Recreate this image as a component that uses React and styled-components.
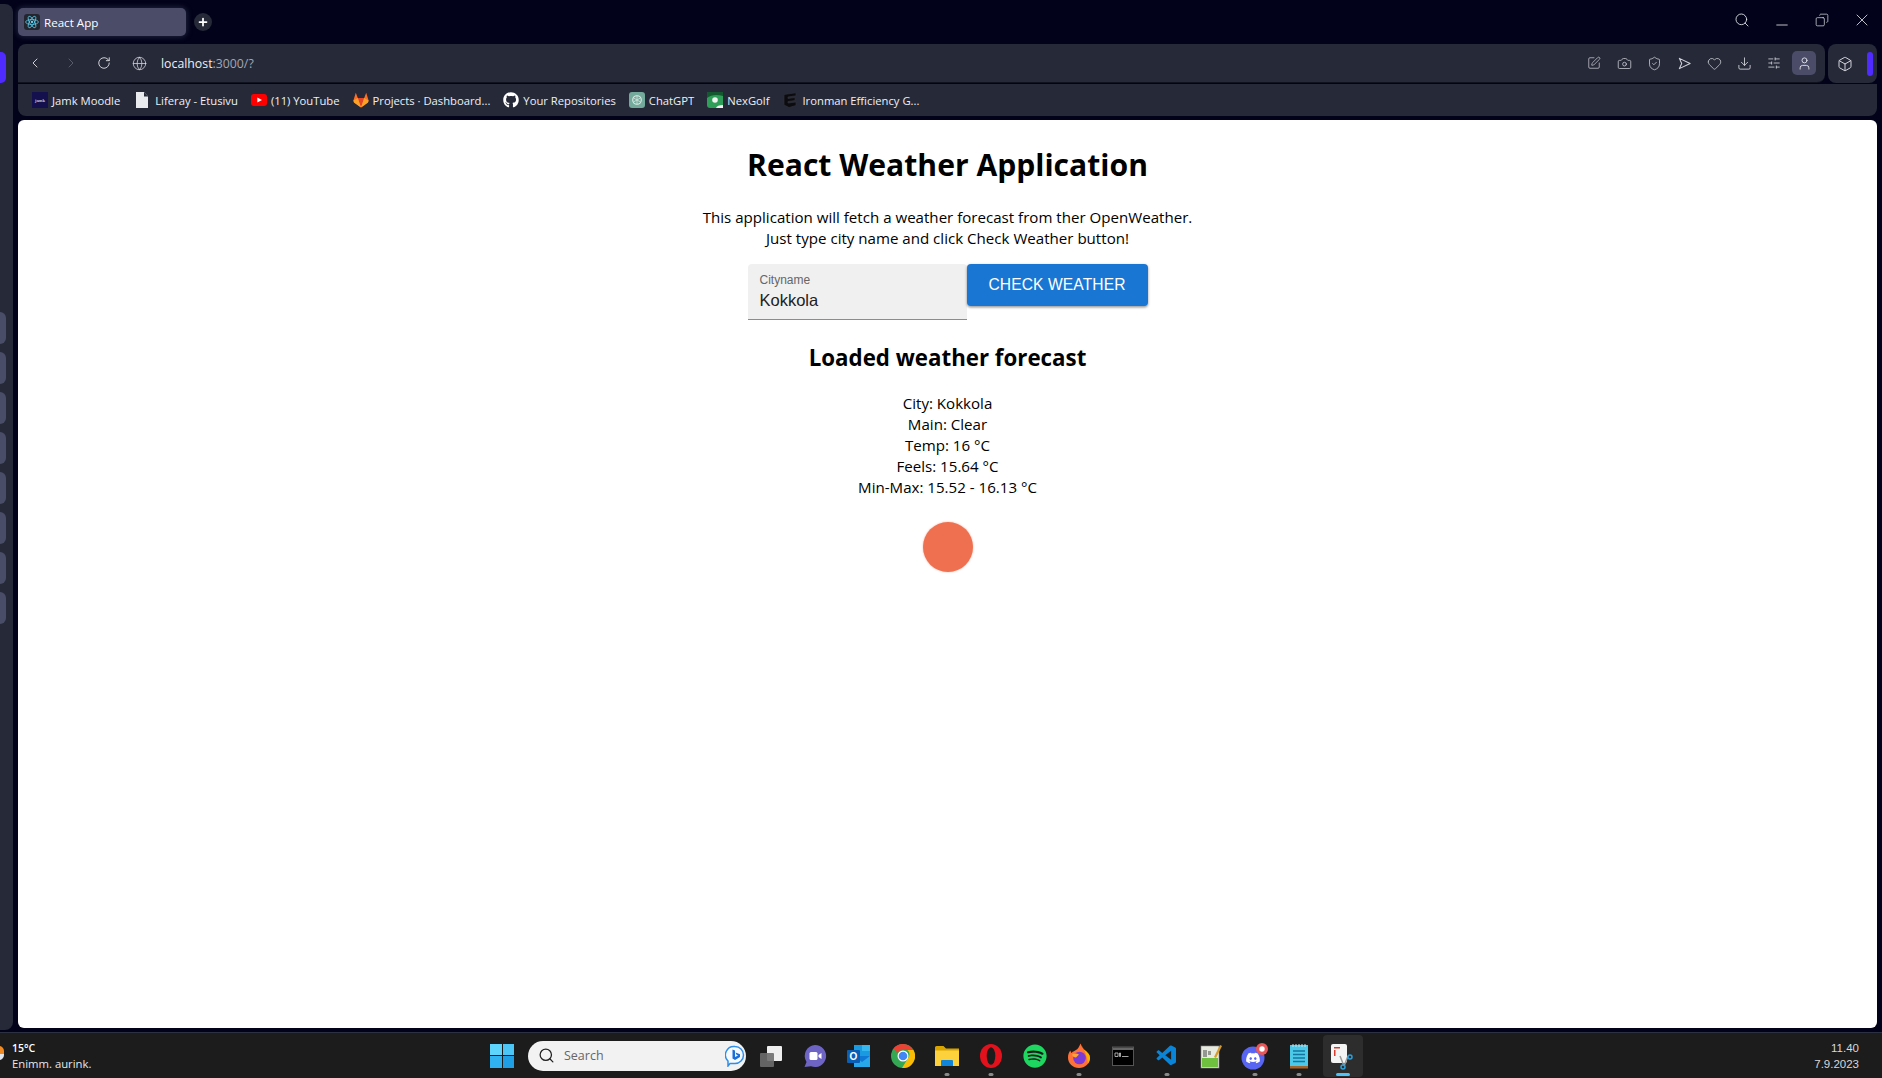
import React from 'react'
import styled, { createGlobalStyle } from 'styled-components'
import {
  ChevronLeft, ChevronRight, RotateCw, Globe, Search, Minus, Copy, X, SquarePen,
  Camera, ShieldCheck, Heart, Download, SlidersHorizontal, User, Box, Plus,
} from 'lucide-react'
import { FaGithub, FaSpotify, FaDiscord } from 'react-icons/fa'
import { VscVscode } from 'react-icons/vsc'

const GlobalStyle = createGlobalStyle`
  html, body { margin: 0; padding: 0; background: #02031a; overflow: hidden; }
  * { box-sizing: border-box; }
`

const Desktop = styled.div`
  width: 1882px;
  height: 1078px;
  display: flex;
  flex-direction: column;
  background: #02031a;
  font-family: 'Open Sans', 'Noto Sans', sans-serif;
`

const Browser = styled.div`
  flex: 1;
  min-height: 0;
  display: flex;
`

const Sidebar = styled.div`
  width: 13px;
  margin: 4px 5px 2px 0;
  background: #262938;
  border-radius: 0 8px 8px 0;
  display: flex;
  flex-direction: column;
`

const SideActive = styled.div`
  width: 6px;
  height: 31px;
  margin-top: 48px;
  background: #4f2bff;
  border-radius: 0 5px 5px 0;
`

const SideList = styled.div`
  display: flex;
  flex-direction: column;
  gap: 8px;
  margin-top: 229px;
`

const SideSlot = styled.div`
  width: 6px;
  height: 32px;
  background: #4a4d68;
  border-radius: 0 6px 6px 0;
`

const Main = styled.div`
  flex: 1;
  min-width: 0;
  display: flex;
  flex-direction: column;
  padding-right: 5px;
`

const TitleBar = styled.div`
  height: 44px;
  padding-top: 8px;
  display: flex;
  align-items: flex-start;
`

const Tab = styled.div`
  width: 168px;
  height: 28px;
  padding: 0 6px;
  display: flex;
  align-items: center;
  gap: 4px;
  background: #4a4c68;
  border-radius: 5px;
  box-shadow: 0 0 6px rgba(120, 125, 165, 0.35);
  color: #fff;
  font-size: 11.6px;
`

const Favicon = styled.div`
  width: 16px;
  height: 16px;
  display: flex;
  align-items: center;
  justify-content: center;
  background: #23262f;
  border-radius: 3px;
`

const NewTab = styled.div`
  width: 18px;
  height: 18px;
  margin: 5px 0 0 8px;
  display: flex;
  align-items: center;
  justify-content: center;
  background: #262938;
  border-radius: 50%;
  color: #fff;
`

const WindowControls = styled.div`
  margin-left: auto;
  display: flex;
  align-items: center;
  gap: 10px;
  height: 24px;
  color: #e4e5ea;
`

const WindowControl = styled.div`
  width: 30px;
  display: flex;
  align-items: center;
  justify-content: center;
`

const ToolRow = styled.div`
  height: 39px;
  display: flex;
  gap: 3px;
`

const AddressBar = styled.div`
  flex: 1;
  display: flex;
  align-items: center;
  padding: 0 9px 0 0;
  background: #262938;
  border-radius: 8px 8px 8px 0;
  border-bottom: 1px solid #11121f;
  color: #e8e9ef;
`

const NavIcon = styled.div`
  width: ${({ $w }) => $w}px;
  display: flex;
  justify-content: center;
  color: ${({ $dim }) => ($dim ? '#5d6070' : '#d9dae0')};
`

const Url = styled.div`
  font-size: 12.3px;
  color: #f0f1f5;
  span { color: #a4a6b2; }
`

const Actions = styled.div`
  margin-left: auto;
  display: flex;
  align-items: center;
  color: #d4d5dc;
`

const Action = styled.div`
  width: 30px;
  height: 24px;
  display: flex;
  align-items: center;
  justify-content: center;
`

const Profile = styled.div`
  width: 24px;
  height: 24px;
  margin-left: 3px;
  display: flex;
  align-items: center;
  justify-content: center;
  background: #4a4c68;
  border-radius: 5px;
  color: #e8e9ef;
`

const ExtensionBox = styled.div`
  width: 49px;
  display: flex;
  align-items: center;
  padding-left: 9px;
  gap: 14px;
  background: #262938;
  border-radius: 8px;
  color: #e0e1e7;
`

const ExtensionBar = styled.div`
  width: 6px;
  height: 24px;
  background: #4f2bff;
  border-radius: 3px;
`

const Bookmarks = styled.div`
  height: 32px;
  margin-top: 1px;
  padding-left: 14px;
  display: flex;
  align-items: center;
  gap: 13px;
  background: #262938;
  border-radius: 0 0 8px 8px;
`

const Bookmark = styled.div`
  display: flex;
  align-items: center;
  gap: 4px;
  color: #eef0f5;
  font-size: 11.25px;
  white-space: nowrap;
`

const Page = styled.div`
  flex: 1;
  min-height: 0;
  margin-top: 4px;
  margin-bottom: 4px;
  padding-top: 27px;
  background: #fff;
  border-radius: 6px;
  display: flex;
  flex-direction: column;
  align-items: center;
  color: #000;
  font-family: 'Open Sans', sans-serif;
  text-align: center;
`

const Title = styled.h1`
  margin: 0;
  font-size: 30.1px;
  line-height: 36px;
  font-weight: 700;
`

const Intro = styled.p`
  margin: 24px 0 0;
  font-size: 15.1px;
  line-height: 21px;
`

const SearchForm = styled.div`
  margin-top: 15px;
  display: flex;
  align-items: flex-start;
`

const Field = styled.div`
  width: 219px;
  height: 56px;
  padding: 8px 12px 0;
  background: #f0f0f0;
  border-bottom: 1px solid #8c8c8c;
  border-radius: 4px 4px 0 0;
  text-align: left;
  font-family: 'Liberation Sans', Arial, sans-serif;
`

const FieldLabel = styled.div`
  font-size: 12px;
  line-height: 16px;
  color: #666;
`

const FieldValue = styled.div`
  margin-top: 1px;
  font-size: 16.5px;
  line-height: 23px;
  color: #212121;
`

const CheckButton = styled.button`
  width: 181px;
  height: 42px;
  padding: 0;
  border: 0;
  background: #1976d2;
  border-radius: 4px;
  box-shadow: 0 1px 3px rgba(0, 0, 0, 0.35), 0 2px 2px rgba(0, 0, 0, 0.12);
  color: #fff;
  font-family: 'Liberation Sans', Arial, sans-serif;
  font-size: 15.6px;
  letter-spacing: 0.1px;
`

const Subtitle = styled.h2`
  margin: 22px 0 0;
  font-size: 22.3px;
  line-height: 31px;
  font-weight: 700;
`

const Forecast = styled.div`
  margin-top: 20px;
  font-size: 15.1px;
  line-height: 21px;
`

const SunDot = styled.div`
  width: 50px;
  height: 50px;
  margin-top: 24px;
  background: #ee7050;
  border-radius: 50%;
  box-shadow: 0 0 2px rgba(238, 112, 80, 0.6);
`

const Taskbar = styled.div`
  height: 46px;
  flex: none;
  position: relative;
  display: flex;
  align-items: center;
  background: #1c1c1c;
  border-top: 1px solid #2b3140;
`

const WeatherGlyph = styled.div`
  position: absolute;
  left: -6px;
  top: 13px;
  width: 10px;
  height: 14px;
  background: linear-gradient(#f08a24 60%, #dfe6ee 60%);
  border-radius: 5px;
`

const Weather = styled.div`
  width: 490px;
  padding-left: 12px;
  color: #e8e8e8;
  font-size: 11.3px;
  line-height: 16px;
  font-family: 'Open Sans', sans-serif;
`

const WeatherTemp = styled.div`
  font-size: 10.5px;
  font-weight: 600;
  color: #fff;
`

const StartButton = styled.div`
  width: 24px;
  height: 24px;
  display: grid;
  grid-template-columns: 1fr 1fr;
  gap: 1px;
`

const StartPane = styled.div`
  background: ${({ $c }) => $c};
`

const SearchBox = styled.div`
  width: 218px;
  height: 30px;
  margin-left: 14px;
  padding: 0 1px 0 10px;
  display: flex;
  align-items: center;
  gap: 9px;
  background: #f2f2f2;
  border-radius: 15px;
  color: #666;
  font-size: 12.5px;
`

const BingMark = styled.div`
  margin-left: auto;
  display: flex;
`

const Apps = styled.div`
  margin-left: 5px;
  display: flex;
  align-items: center;
  gap: 4px;
`

const AppSlot = styled.div`
  position: relative;
  width: 40px;
  height: 42px;
  flex: none;
  display: flex;
  align-items: center;
  justify-content: center;
  background: ${({ $active }) => ($active ? '#2d2d2d' : 'transparent')};
  border-radius: 4px;
`

const RunDot = styled.div`
  position: absolute;
  bottom: 1px;
  left: 50%;
  width: ${({ $active }) => ($active ? 14 : 5)}px;
  height: 3px;
  transform: translateX(-50%);
  background: ${({ $active }) => ($active ? '#4fc3f7' : '#8a8a8a')};
  border-radius: 2px;
`

const Clock = styled.div`
  margin-left: auto;
  padding-right: 23px;
  text-align: right;
  color: #d8d8d8;
  font-size: 11.5px;
  line-height: 16px;
  font-family: 'Liberation Sans', Arial, sans-serif;
`

const ReactLogo = () => (
  <svg width="14" height="14" viewBox="-12 -12 24 24" fill="none" stroke="#61dafb" strokeWidth="1.2">
    <circle r="2" fill="#61dafb" stroke="none" />
    <ellipse rx="11" ry="4.2" />
    <ellipse rx="11" ry="4.2" transform="rotate(60)" />
    <ellipse rx="11" ry="4.2" transform="rotate(120)" />
  </svg>
)

const StealthArrow = () => (
  <svg width="15" height="15" viewBox="0 0 16 16" fill="none" stroke="currentColor" strokeWidth="1.1" strokeLinejoin="round">
    <path d="M2.5 2.5 14 8 2.5 13.5 5 8z" />
  </svg>
)

const JamkIcon = () => (
  <svg width="16" height="16" viewBox="0 0 16 16">
    <rect width="16" height="16" fill="#14104e" />
    <text x="8" y="10" fontSize="5" fontFamily="Liberation Serif" fill="#fff" textAnchor="middle">jamk</text>
  </svg>
)

const PageIcon = () => (
  <svg width="18" height="16" viewBox="0 0 18 16">
    <path d="M3 0h8l4 4.500V16H3z" fill="#e8eaee" />
    <path d="M11 0v4.500h4z" fill="#262938" />
  </svg>
)

const YoutubeIcon = () => (
  <svg width="16" height="12" viewBox="0 0 16 12">
    <rect width="16" height="12" rx="3" fill="#f00" />
    <path d="M6.300 3.400v5.200L11 6z" fill="#fff" />
  </svg>
)

const GitlabIcon = () => (
  <svg width="16" height="16" viewBox="0 0 16 16">
    <path d="M8 15.500 1 10.400l-.6-2L2.800.8l2 5.100h6.400L13.200.8l2.400 7.600-.6 2z" fill="#fc6d26" />
    <path d="M8 15.500 4.800 5.900h6.400z" fill="#e24329" />
    <path d="M8 15.500 1 10.400l-.6-2 4.400-2.500zM8 15.500l7-5.100.6-2-4.400-2.500z" fill="#fca326" />
  </svg>
)

const ChatGptIcon = () => (
  <svg width="16" height="16" viewBox="0 0 16 16" fill="none">
    <rect width="16" height="16" rx="3" fill="#74aa9c" />
    <circle cx="8" cy="8" r="4.300" stroke="#dcebe6" strokeWidth="1.100" />
    <path d="M8 3.700v8.600M4.300 5.800l7.400 4.300M11.700 5.800l-7.400 4.300" stroke="#dcebe6" strokeWidth=".7" />
  </svg>
)

const NexGolfIcon = () => (
  <svg width="16" height="16" viewBox="0 0 16 16">
    <rect width="16" height="16" rx="3" fill="#2f9e58" />
    <path d="M0 6q6-5 16-2V0H0z" fill="#14582f" />
    <circle cx="8" cy="8" r="2.800" fill="#f2f2f2" />
    <path d="M9 16q1-3 7-3v3z" fill="#f2f2f2" />
  </svg>
)

const IronmanIcon = () => (
  <svg width="16" height="16" viewBox="0 0 16 16" fill="#0c0c10" stroke="#33343c" strokeWidth=".6">
    <path d="M2 2.500 14 .8v3L6 5v1.500l7-1v3l-7 1V11l8-1v3.500L7 15.500 2 13z" />
  </svg>
)

const WinPanes = () => (
  <StartButton>
    <StartPane $c="#5ed3fb" />
    <StartPane $c="#4cc6f7" />
    <StartPane $c="#2fb2ef" />
    <StartPane $c="#1f9fe6" />
  </StartButton>
)

const BingIcon = () => (
  <svg width="20" height="22" viewBox="0 0 20 22">
    <path d="M10 1.500a8.500 8.500 0 0 1 0 17H5l-2 2.500v-5A8.500 8.500 0 0 1 10 1.500z" fill="#f7fbff" stroke="#2f8fe8" strokeWidth="1.500" />
    <path d="M7.500 4.500 10 5.500V12l3-1.500-1.700-.9-.8-2 4.500 1.600v2.800L10 15l-2.500-1.500z" fill="#1b6fd8" />
  </svg>
)

const TaskViewIcon = () => (
  <svg width="24" height="24" viewBox="0 0 24 24">
    <rect x="8" y="2" width="15" height="15" rx="1" fill="#eee" />
    <rect x="1" y="9" width="14" height="14" rx="1" fill="#6d6d6d" fillOpacity=".9" />
  </svg>
)

const TeamsIcon = () => (
  <svg width="24" height="24" viewBox="0 0 24 24">
    <path d="M12 1a11 11 0 1 1-4 21.200L1.500 23 3.500 18A11 11 0 0 1 12 1z" fill="#6d64c4" />
    <rect x="6.500" y="8" width="8" height="8" rx="1.500" fill="#fff" />
    <path d="m15.500 11 3-2v6l-3-2z" fill="#fff" />
  </svg>
)

const OutlookIcon = () => (
  <svg width="24" height="24" viewBox="0 0 24 24">
    <rect x="7" y="1" width="16" height="12" fill="#1a9ae0" />
    <rect x="15" y="1" width="8" height="6" fill="#36b7f0" />
    <path d="M7 12h16v11H7z" fill="#0f78d4" />
    <path d="m7 12 8 6 8-6v11H7z" fill="#28a8ea" />
    <rect x="0" y="6" width="13" height="13" rx="1" fill="#0a5fb4" />
    <text x="6.500" y="16" fontSize="10" fontFamily="Liberation Sans" fontWeight="700" fill="#fff" textAnchor="middle">O</text>
  </svg>
)

const ChromeIcon = () => (
  <svg width="24" height="24" viewBox="0 0 24 24">
    <circle cx="12" cy="12" r="12" fill="#34a853" />
    <path d="M12 0a12 12 0 0 1 10.400 6H12a6 6 0 0 0-5.400 3.400L2.500 4.500A12 12 0 0 1 12 0z" fill="#ea4335" />
    <path d="M22.400 6A12 12 0 0 1 11 24l5.500-9a6 6 0 0 0 0-9z" fill="#fbbc05" />
    <circle cx="12" cy="12" r="5.500" fill="#fff" />
    <circle cx="12" cy="12" r="4.300" fill="#4285f4" />
  </svg>
)

const FolderIcon = () => (
  <svg width="24" height="24" viewBox="0 0 24 24">
    <path d="M0 3.500A1.500 1.500 0 0 1 1.500 2h7l2.500 2.500h13V22H0z" fill="#d9a300" />
    <path d="M0 6.500h24V22H0z" fill="#fdd13c" />
    <path d="M6 17a1 1 0 0 1 1-1h10a1 1 0 0 1 1 1v5H6z" fill="#0f84d8" />
  </svg>
)

const OperaIcon = () => (
  <svg width="24" height="24" viewBox="0 0 24 24">
    <ellipse cx="12" cy="12" rx="11" ry="12" fill="#e3111c" />
    <ellipse cx="12" cy="12" rx="4.300" ry="8.800" fill="#1c1c1c" />
  </svg>
)

const FirefoxIcon = () => (
  <svg width="24" height="26" viewBox="0 0 24 26">
    <path d="M12 25C6 25 1 20.500 1 14.500 1 11.500 2 9 3.500 7.500c0 1 .5 2 1 2.500C6 8 8 8 9 7c1.500-1 3-2.500 4.500-6.500C14.500 3 15 4 17 6.500c3.500 2.500 6 5 6 8.500 0 5.500-5 10-11 10z" fill="#ff7139" />
    <path d="M13.500.5C15 3 15.500 4 17 6.500c3.500 2.500 6 5 6 8.500 0 2-1 4-2 5.500-1-7-3-14-7.500-20z" fill="#ffb000" />
    <circle cx="12.500" cy="15" r="6.300" fill="#7c3bd6" />
    <path d="M5 11.500c2.500-1.500 5-1 7 0l-3 3c-2 0-3.500-1-4-3z" fill="#ffa436" />
  </svg>
)

const TerminalIcon = () => (
  <svg width="24" height="24" viewBox="0 0 24 24">
    <rect x="1.500" y="3" width="21" height="18.500" fill="#000" stroke="#555" />
    <rect x="2" y="3.500" width="20" height="2.500" fill="#666" />
    <path d="M4 9h3v3.500H4zM8.500 9h1v3.500h-1zM11 12.500h6.500" stroke="#ccc" strokeWidth=".8" fill="none" />
  </svg>
)

const NotepadPlusIcon = () => (
  <svg width="24" height="26" viewBox="0 0 24 26">
    <rect x="2" y="3" width="18" height="22" fill="#e7eadf" stroke="#8b8b8b" strokeWidth=".6" />
    <path d="M3 15h16v9H3z" fill="#70c040" />
    <path d="M5 7v7M7 7v7M9 9h3M9 11h3" stroke="#444" strokeWidth="1" />
    <path d="m15 14 6-12 2 1-6 12z" fill="#d79b29" />
  </svg>
)

const NotesIcon = () => (
  <svg width="20" height="26" viewBox="0 0 20 26">
    <rect x="1" y="2" width="18" height="21" fill="#4cc8e8" />
    <rect x="1" y="23" width="18" height="2.500" fill="#a5652a" />
    <path d="M4 1v3M7 1v3M10 1v3M13 1v3M16 1v3" stroke="#bfeaf5" />
    <path d="M4 8h12M4 11.500h12M4 15h12M4 18.500h12" stroke="#1574a0" strokeWidth="1.500" />
  </svg>
)

const SnipIcon = () => (
  <svg width="26" height="28" viewBox="0 0 26 28">
    <rect x="1" y="2" width="16" height="19" rx="2" fill="#f4f4f4" />
    <path d="M4 5h6v1.500H4zM4 8h1.500v6H4z" fill="#d83b2b" />
    <path d="M10 14 14 24M18 14l-4 10" stroke="#9b9b9b" strokeWidth="1.500" />
    <circle cx="20" cy="15" r="2" fill="none" stroke="#2aa0dc" strokeWidth="1.500" />
    <circle cx="13" cy="25" r="2" fill="none" stroke="#2aa0dc" strokeWidth="1.500" />
  </svg>
)

const DiscordIcon = () => (
  <svg width="28" height="28" viewBox="0 0 28 28">
    <circle cx="12" cy="16" r="11.500" fill="#5865f2" />
    <FaDiscord x="4.500" y="8.500" size={15} color="#fff" />
    <circle cx="21" cy="7" r="6" fill="#e8575a" />
    <circle cx="21" cy="7" r="2.700" fill="#fff" />
  </svg>
)

const bookmarks = [
  { label: 'Jamk Moodle', icon: <JamkIcon /> },
  { label: 'Liferay - Etusivu', icon: <PageIcon /> },
  { label: '(11) YouTube', icon: <YoutubeIcon /> },
  { label: 'Projects · Dashboard...', icon: <GitlabIcon /> },
  { label: 'Your Repositories', icon: <FaGithub size={16} color="#fff" /> },
  { label: 'ChatGPT', icon: <ChatGptIcon /> },
  { label: 'NexGolf', icon: <NexGolfIcon /> },
  { label: 'Ironman Efficiency G...', icon: <IronmanIcon /> },
]

const forecast = [
  'City: Kokkola',
  'Main: Clear',
  'Temp: 16 °C',
  'Feels: 15.64 °C',
  'Min-Max: 15.52 - 16.13 °C',
]

const apps = [
  { icon: <TaskViewIcon /> },
  { icon: <TeamsIcon /> },
  { icon: <OutlookIcon /> },
  { icon: <ChromeIcon /> },
  { icon: <FolderIcon />, running: true },
  { icon: <OperaIcon />, running: true },
  { icon: <FaSpotify size={24} color="#1ed760" /> },
  { icon: <FirefoxIcon />, running: true },
  { icon: <TerminalIcon /> },
  { icon: <VscVscode size={24} color="#0a84d6" />, running: true },
  { icon: <NotepadPlusIcon /> },
  { icon: <DiscordIcon />, running: true },
  { icon: <NotesIcon />, running: true },
  { icon: <SnipIcon />, active: true },
]

export default function App() {
  return (
    <Desktop>
      <GlobalStyle />
      <Browser>
        <Sidebar>
          <SideActive />
          <SideList>
            {Array.from({ length: 8 }, (_, i) => <SideSlot key={i} />)}
          </SideList>
        </Sidebar>
        <Main>
          <TitleBar>
            <Tab>
              <Favicon><ReactLogo /></Favicon>
              React App
            </Tab>
            <NewTab><Plus size={12} strokeWidth={3.5} /></NewTab>
            <WindowControls>
              <WindowControl><Search size={16} strokeWidth={1.3} /></WindowControl>
              <WindowControl><Minus size={18} strokeWidth={1.1} style={{ marginTop: 10 }} /></WindowControl>
              <WindowControl><Copy size={14} strokeWidth={1.2} style={{ transform: 'scaleX(-1)' }} /></WindowControl>
              <WindowControl><X size={20} strokeWidth={1} /></WindowControl>
            </WindowControls>
          </TitleBar>
          <ToolRow>
            <AddressBar>
              <NavIcon $w={34}><ChevronLeft size={16} strokeWidth={1.4} /></NavIcon>
              <NavIcon $w={38} $dim><ChevronRight size={16} strokeWidth={1.4} /></NavIcon>
              <NavIcon $w={28}><RotateCw size={14} strokeWidth={1.6} /></NavIcon>
              <NavIcon $w={43}><Globe size={15} strokeWidth={1.2} /></NavIcon>
              <Url>localhost<span>:3000/?</span></Url>
              <Actions>
                <Action><SquarePen size={14} strokeWidth={1.2} /></Action>
                <Action><Camera size={15} strokeWidth={1.2} /></Action>
                <Action><ShieldCheck size={15} strokeWidth={1.2} /></Action>
                <Action><StealthArrow /></Action>
                <Action><Heart size={15} strokeWidth={1.2} /></Action>
                <Action><Download size={15} strokeWidth={1.4} /></Action>
                <Action><SlidersHorizontal size={14} strokeWidth={1.4} /></Action>
                <Profile><User size={15} strokeWidth={1.4} /></Profile>
              </Actions>
            </AddressBar>
            <ExtensionBox>
              <Box size={16} strokeWidth={1.4} />
              <ExtensionBar />
            </ExtensionBox>
          </ToolRow>
          <Bookmarks>
            {bookmarks.map((b) => (
              <Bookmark key={b.label}>{b.icon}{b.label}</Bookmark>
            ))}
          </Bookmarks>
          <Page>
            <Title>React Weather Application</Title>
            <Intro>
              This application will fetch a weather forecast from ther OpenWeather.
              <br />
              Just type city name and click Check Weather button!
            </Intro>
            <SearchForm>
              <Field>
                <FieldLabel>Cityname</FieldLabel>
                <FieldValue>Kokkola</FieldValue>
              </Field>
              <CheckButton>CHECK WEATHER</CheckButton>
            </SearchForm>
            <Subtitle>Loaded weather forecast</Subtitle>
            <Forecast>
              {forecast.map((line) => <div key={line}>{line}</div>)}
            </Forecast>
            <SunDot />
          </Page>
        </Main>
      </Browser>
      <Taskbar>
        <WeatherGlyph />
        <Weather>
          <WeatherTemp>15°C</WeatherTemp>
          Enimm. aurink.
        </Weather>
        <WinPanes />
        <SearchBox>
          <Search size={17} color="#222" strokeWidth={1.8} />
          Search
          <BingMark><BingIcon /></BingMark>
        </SearchBox>
        <Apps>
          {apps.map((a, i) => (
            <AppSlot key={i} $active={a.active}>
              {a.icon}
              {(a.running || a.active) && <RunDot $active={a.active} />}
            </AppSlot>
          ))}
        </Apps>
        <Clock>
          <div>11.40</div>
          <div>7.9.2023</div>
        </Clock>
      </Taskbar>
    </Desktop>
  )
}
